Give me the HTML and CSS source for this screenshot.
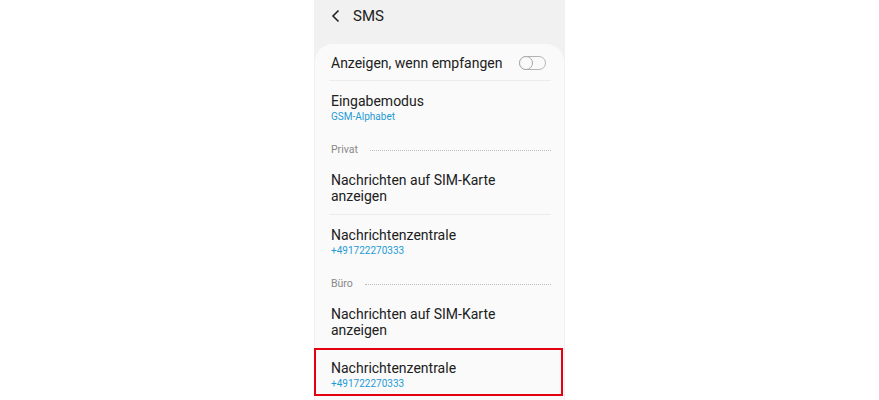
FILE: index.html
```html
<!DOCTYPE html>
<html lang="de">
<head>
    <meta charset="UTF-8">
    <meta name="viewport" content="width=device-width, initial-scale=1.0">
    <title>SMS</title>
    <link rel="stylesheet" href="styles.css">
</head>
<body>
    <div class="screen">
        <div class="appbar">
            <svg class="back" width="10" height="14" viewBox="0 0 10 14">
                <path d="M7.5 1.5 L2 7 L7.5 12.5" fill="none" stroke="#222" stroke-width="1.6"/>
            </svg>
            <span class="title">SMS</span>
        </div>

        <div class="card">
            <div class="row first divided">
                <span class="label">Anzeigen, wenn empfangen</span>
                <span class="toggle"><span class="knob"></span></span>
            </div>

            <div class="row">
                <div class="label">Eingabemodus</div>
                <div class="sub">GSM-Alphabet</div>
            </div>

            <div class="header">
                <span>Privat</span>
                <span class="dots"></span>
            </div>

            <div class="row divided">
                <div class="label">Nachrichten auf SIM-Karte<br>anzeigen</div>
            </div>

            <div class="row">
                <div class="label">Nachrichtenzentrale</div>
                <div class="sub">+491722270333</div>
            </div>

            <div class="header">
                <span>Büro</span>
                <span class="dots"></span>
            </div>

            <div class="row">
                <div class="label">Nachrichten auf SIM-Karte<br>anzeigen</div>
            </div>

            <div class="row marked">
                <div class="label">Nachrichtenzentrale</div>
                <div class="sub">+491722270333</div>
                <div class="highlight"></div>
            </div>
        </div>
    </div>
</body>
</html>
```

FILE: styles.css
```css
body {
    margin: 0;
    background: #fff;
    font-family: Roboto, "Noto Sans", sans-serif;
    color: #202020;
}
.screen {
    width: 251px;
    height: 400px;
    margin-left: 314px;
    background: #f1f1f1;
    overflow: hidden;
}
.appbar {
    height: 44px;
    display: flex;
    align-items: flex-start;
    padding-top: 9px;
    box-sizing: border-box;
}
.back {
    margin: 0 0 0 17px;
}
.title {
    margin-left: 12px;
    font-size: 15px;
    line-height: 15px;
}
.card {
    margin: 0 1px;
    padding: 0 13px 0 14px;
    height: 356px;
    background: #fafafa;
    border-radius: 18px 18px 0 0;
}
.row {
    position: relative;
    padding: 12px 0 10px 2px;
}
.row.first {
    height: 37px;
    padding: 2px 0 0 2px;
    display: flex;
    align-items: center;
    justify-content: space-between;
    box-sizing: border-box;
}
.divided {
    border-bottom: 1px solid #ececec;
}
.label {
    font-size: 14px;
    line-height: 16px;
}
.sub {
    font-size: 10px;
    line-height: 16px;
    color: #1f9bd5;
}
.toggle {
    position: relative;
    width: 25px;
    height: 12px;
    margin-right: 5px;
    border: 1px solid #b4b4b4;
    border-radius: 8px;
}
.knob {
    position: absolute;
    left: -1px;
    top: -1px;
    width: 12px;
    height: 12px;
    border: 1px solid #a8a8a8;
    border-radius: 50%;
    background: #fafafa;
}
.header {
    display: flex;
    align-items: center;
    gap: 12px;
    padding: 8px 0 3px 2px;
    font-size: 10.5px;
    line-height: 14px;
    color: #888;
}
.dots {
    flex: 1;
    border-top: 1px dotted #bdbdbd;
}
.highlight {
    position: absolute;
    left: -15px;
    top: 0;
    width: 245px;
    height: 44px;
    border: 2px solid #e3000f;
}
```
